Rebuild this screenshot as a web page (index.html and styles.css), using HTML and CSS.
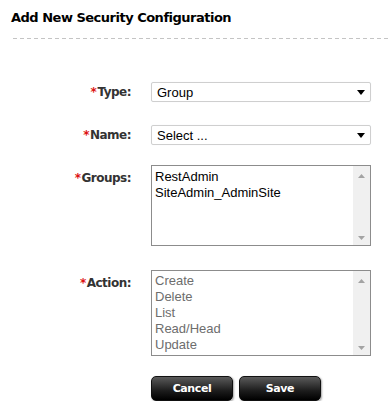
FILE: index.html
```html
<!DOCTYPE html>
<html lang="en">
<head>
    <meta charset="UTF-8">
    <title>Add New Security Configuration</title>
    <link rel="stylesheet" href="styles.css">
</head>
<body>
    <div class="page">
        <h1 class="page-title">Add New Security Configuration</h1>
        <div class="divider"></div>

        <form class="config-form">
            <div class="form-row row-type">
                <label class="field-label"><span class="req">*</span>Type:</label>
                <div class="select-box">
                    <span class="select-value">Group</span>
                    <svg class="select-arrow" width="8" height="5" viewBox="0 0 8 5"><path d="M0 0h8L4 5z" fill="#000"/></svg>
                </div>
            </div>

            <div class="form-row row-name">
                <label class="field-label"><span class="req">*</span>Name:</label>
                <div class="select-box">
                    <span class="select-value">Select ...</span>
                    <svg class="select-arrow" width="8" height="5" viewBox="0 0 8 5"><path d="M0 0h8L4 5z" fill="#000"/></svg>
                </div>
            </div>

            <div class="form-row row-groups">
                <label class="field-label list-label"><span class="req">*</span>Groups:</label>
                <div class="list-box groups-box">
                    <ul class="list-items">
                        <li>RestAdmin</li>
                        <li>SiteAdmin_AdminSite</li>
                    </ul>
                    <div class="scroll-track">
                        <svg width="7" height="4" viewBox="0 0 7 4"><path d="M0 4L3.5 0 7 4z" fill="#a3a3a3"/></svg>
                        <svg width="7" height="4" viewBox="0 0 7 4"><path d="M0 0h7L3.5 4z" fill="#a3a3a3"/></svg>
                    </div>
                </div>
            </div>

            <div class="form-row row-action">
                <label class="field-label list-label"><span class="req">*</span>Action:</label>
                <div class="list-box action-box">
                    <ul class="list-items disabled">
                        <li>Create</li>
                        <li>Delete</li>
                        <li>List</li>
                        <li>Read/Head</li>
                        <li>Update</li>
                    </ul>
                    <div class="scroll-track">
                        <svg width="7" height="4" viewBox="0 0 7 4"><path d="M0 4L3.5 0 7 4z" fill="#a3a3a3"/></svg>
                        <svg width="7" height="4" viewBox="0 0 7 4"><path d="M0 0h7L3.5 4z" fill="#a3a3a3"/></svg>
                    </div>
                </div>
            </div>

            <div class="form-actions">
                <button type="button" class="btn">Cancel</button>
                <button type="button" class="btn">Save</button>
            </div>
        </form>
    </div>
</body>
</html>
```

FILE: styles.css
```css
body {
    margin: 0;
    background: #fff;
    font-family: 'DejaVu Sans', Verdana, sans-serif;
    color: #000;
}
.page {
    width: 388px;
    padding-top: 10px;
}
.page-title {
    margin: 0 0 0 11px;
    font-size: 13px;
    font-weight: bold;
    letter-spacing: -0.5px;
    line-height: 16px;
    color: #000;
}
.divider {
    margin: 12px 0 0 13px;
    height: 1px;
    background: repeating-linear-gradient(to right, #c4c4c4 0 4px, transparent 4px 7px);
}
.config-form {
    padding-top: 43px;
}
.form-row {
    display: flex;
    align-items: center;
}
.row-name {
    margin-top: 23px;
}
.row-groups {
    margin-top: 20px;
    align-items: flex-start;
}
.row-action {
    margin-top: 24px;
    align-items: flex-start;
}
.field-label {
    width: 151px;
    padding-right: 20px;
    box-sizing: border-box;
    text-align: right;
    font-size: 12px;
    font-weight: bold;
    letter-spacing: -0.5px;
    color: #333;
}
.list-label {
    padding-top: 6px;
}
.req {
    color: #d11;
    margin-right: 1px;
}
.select-box {
    position: relative;
    width: 220px;
    height: 20px;
    box-sizing: border-box;
    border: 1px solid #cfcfcf;
    border-radius: 2px;
    box-shadow: 0 0 1px #e4e9f0;
    display: flex;
    align-items: center;
    padding-left: 5px;
    font-family: 'Liberation Sans', Arial, sans-serif;
    font-size: 13px;
}
.select-arrow {
    position: absolute;
    right: 5px;
    top: 7px;
}
.list-box {
    width: 220px;
    box-sizing: border-box;
    border: 1px solid #8c8c8c;
    display: flex;
    font-family: 'Liberation Sans', Arial, sans-serif;
    font-size: 13px;
}
.groups-box {
    height: 81px;
}
.action-box {
    height: 86px;
}
.list-items {
    flex: 1;
    list-style: none;
    margin: 0;
    padding: 3px 0 0 3px;
    line-height: 16px;
}
.list-items.disabled {
    color: #6d6d6d;
    padding-top: 2px;
}
.scroll-track {
    width: 17px;
    background: #f0f0f0;
    display: flex;
    flex-direction: column;
    justify-content: space-between;
    align-items: center;
    padding: 8px 0 5px;
    box-sizing: border-box;
}
.form-actions {
    display: flex;
    gap: 6px;
    padding-left: 151px;
    margin-top: 20px;
}
.btn {
    width: 82px;
    height: 25px;
    border: 1px solid #111;
    border-radius: 5px;
    background: linear-gradient(#5a5a5a, #1c1c1c 60%, #000);
    box-shadow: 1px 1px 2px rgba(0,0,0,0.35);
    color: #fff;
    font-family: 'DejaVu Sans', Verdana, sans-serif;
    font-size: 11px;
    font-weight: bold;
    letter-spacing: -0.4px;
    padding: 0;
}
```
